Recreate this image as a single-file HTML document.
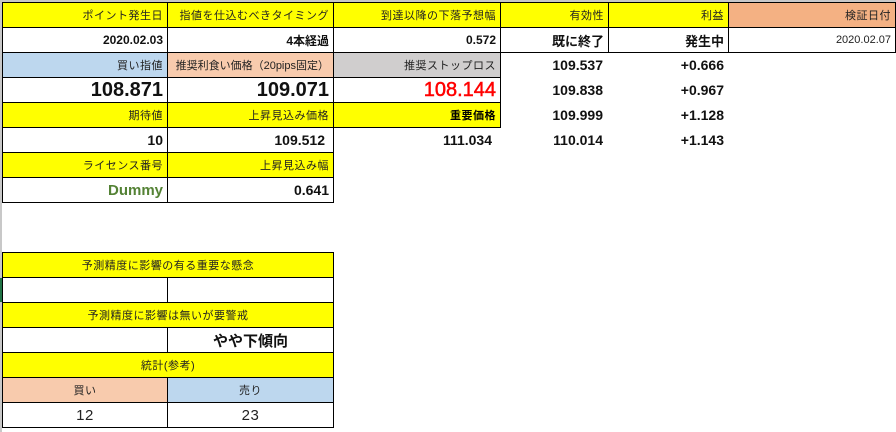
<!DOCTYPE html>
<html><head><meta charset="utf-8"><style>
body{margin:0;width:896px;height:432px;background:#fff;position:relative;overflow:hidden;font-family:"Liberation Sans","Noto Sans CJK JP",sans-serif;}
.c{position:absolute;box-sizing:border-box;display:flex;align-items:center;justify-content:flex-end;padding-right:4px;font-size:11px;color:#222;white-space:nowrap;letter-spacing:0.5px}
.b{border:1px solid #000}
.y{background:#ffff00}
.bl{background:#bdd7ee}
.pk{background:#f8cbad}
.gr{background:#d0cece}
.pe{background:#f4b183}
.v{font-weight:bold;font-size:14px;color:#111;letter-spacing:0}
.V{font-weight:bold;font-size:20px;color:#111;letter-spacing:0}
.ct{justify-content:center;padding:0}
</style></head><body>
<div style="position:absolute;left:0;top:0;width:896px;height:2px;background:#c8c8c8"></div>
<div style="position:absolute;left:0;top:0;width:2px;height:432px;background:#c8c8c8"></div>
<div style="position:absolute;left:0;top:278px;width:2px;height:24px;background:#217346"></div>

<div class="c b y" style="left:2px;top:2px;width:166px;height:26px">ポイント発生日</div>
<div class="c b y" style="left:167px;top:2px;width:167px;height:26px">指値を仕込むべきタイミング</div>
<div class="c b y" style="left:333px;top:2px;width:168px;height:26px">到達以降の下落予想幅</div>
<div class="c b y" style="left:500px;top:2px;width:109px;height:26px">有効性</div>
<div class="c b y" style="left:608px;top:2px;width:121px;height:26px">利益</div>
<div class="c b pe" style="left:728px;top:2px;width:168px;height:26px">検証日付</div>

<div class="c b v" style="left:2px;top:27px;width:166px;height:26px;font-size:12px">2020.02.03</div>
<div class="c b v" style="left:167px;top:27px;width:167px;height:26px;font-size:12px">4本経過</div>
<div class="c b v" style="left:333px;top:27px;width:168px;height:26px;font-size:12px">0.572</div>
<div class="c b v" style="left:500px;top:27px;width:109px;height:26px;font-size:13px">既に終了</div>
<div class="c b v" style="left:608px;top:27px;width:121px;height:26px;font-size:13px">発生中</div>
<div class="c b" style="left:728px;top:27px;width:168px;height:26px;letter-spacing:0">2020.02.07</div>

<div class="c b bl" style="left:2px;top:52px;width:166px;height:26px">買い指値</div>
<div class="c b pk" style="left:167px;top:52px;width:167px;height:26px;letter-spacing:0">推奨利食い価格（20pips固定）</div>
<div class="c b gr" style="left:333px;top:52px;width:168px;height:26px">推奨ストップロス</div>
<div class="c v" style="left:500px;top:52px;width:108px;height:26px;padding-right:5px">109.537</div>
<div class="c v" style="left:608px;top:52px;width:120px;height:26px;padding-right:4px">+0.666</div>

<div class="c b V" style="left:2px;top:77px;width:166px;height:26px">108.871</div>
<div class="c b V" style="left:167px;top:77px;width:167px;height:26px">109.071</div>
<div class="c b V" style="left:333px;top:77px;width:168px;height:26px;color:#ff0000;font-weight:normal;-webkit-text-stroke:0.5px #f00">108.144</div>
<div class="c v" style="left:500px;top:77px;width:108px;height:26px;padding-right:5px">109.838</div>
<div class="c v" style="left:608px;top:77px;width:120px;height:26px;padding-right:4px">+0.967</div>

<div class="c b y" style="left:2px;top:102px;width:166px;height:26px">期待値</div>
<div class="c b y" style="left:167px;top:102px;width:167px;height:26px">上昇見込み価格</div>
<div class="c b y" style="left:333px;top:102px;width:168px;height:26px;font-weight:bold;color:#000">重要価格</div>
<div class="c v" style="left:500px;top:102px;width:108px;height:26px;padding-right:5px">109.999</div>
<div class="c v" style="left:608px;top:102px;width:120px;height:26px;padding-right:4px">+1.128</div>

<div class="c b v" style="left:2px;top:127px;width:166px;height:26px">10</div>
<div class="c b v" style="left:167px;top:127px;width:167px;height:26px;padding-right:8px">109.512</div>
<div class="c v" style="left:333px;top:127px;width:168px;height:26px;padding-right:9px">111.034</div>
<div class="c v" style="left:500px;top:127px;width:108px;height:26px;padding-right:5px">110.014</div>
<div class="c v" style="left:608px;top:127px;width:120px;height:26px;padding-right:4px">+1.143</div>

<div class="c b y" style="left:2px;top:152px;width:166px;height:26px">ライセンス番号</div>
<div class="c b y" style="left:167px;top:152px;width:167px;height:26px">上昇見込み幅</div>

<div class="c b v" style="left:2px;top:177px;width:166px;height:26px;color:#548235;font-size:15px">Dummy</div>
<div class="c b v" style="left:167px;top:177px;width:167px;height:26px">0.641</div>

<div class="c b y ct" style="left:2px;top:252px;width:332px;height:26px">予測精度に影響の有る重要な懸念</div>
<div class="c b" style="left:2px;top:277px;width:166px;height:26px"></div>
<div class="c b" style="left:167px;top:277px;width:167px;height:26px"></div>
<div class="c b y ct" style="left:2px;top:302px;width:332px;height:26px">予測精度に影響は無いが要警戒</div>
<div class="c b" style="left:2px;top:327px;width:166px;height:26px"></div>
<div class="c b v ct" style="left:167px;top:327px;width:167px;height:26px;font-size:15px">やや下傾向</div>
<div class="c b y ct" style="left:2px;top:352px;width:332px;height:26px">統計(参考)</div>
<div class="c b pk ct" style="left:2px;top:377px;width:166px;height:26px">買い</div>
<div class="c b bl ct" style="left:167px;top:377px;width:167px;height:26px">売り</div>
<div class="c b ct" style="left:2px;top:402px;width:166px;height:26px;font-size:15px">12</div>
<div class="c b ct" style="left:167px;top:402px;width:167px;height:26px;font-size:15px">23</div>
</body></html>
